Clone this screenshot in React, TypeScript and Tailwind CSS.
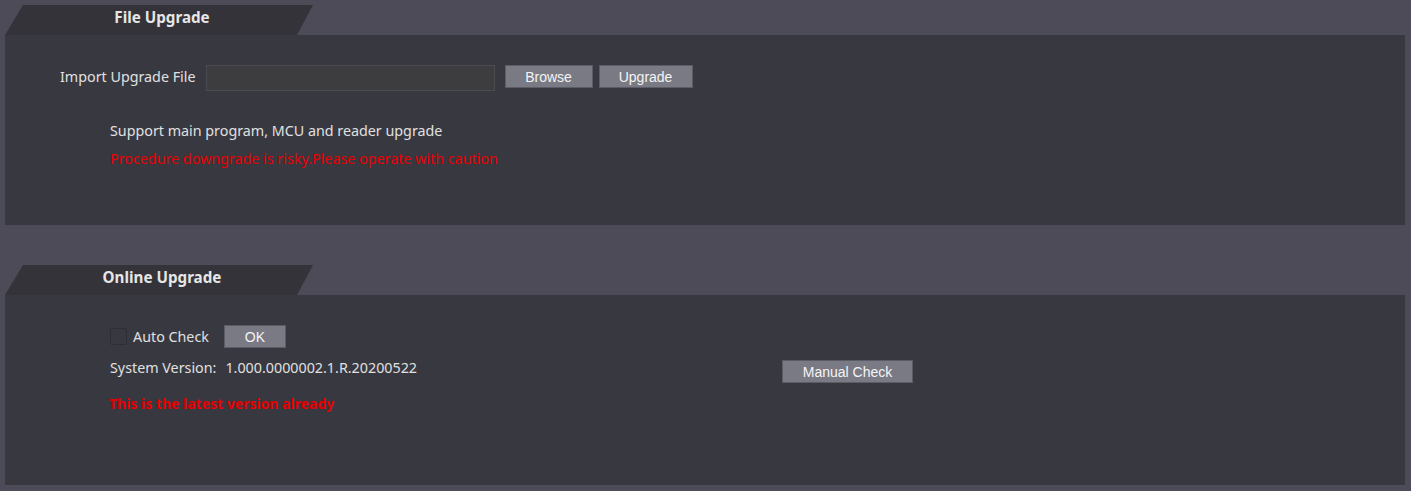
import React from "react";

const font = { fontFamily: '"Noto Sans", "Open Sans", sans-serif' };

function Tab({ title }: { title: string }) {
  return (
    <div className="flex h-[30px] w-[308px] items-start justify-center bg-[#333339] pl-[6px] pt-[2px] [clip-path:polygon(18px_0,308px_0,292px_100%,0_100%)]">
      <span className="text-[15.2px] font-bold leading-[20px] text-[#e6e6e6]">{title}</span>
    </div>
  );
}

function Btn({ label, w }: { label: string; w: string }) {
  return (
    <button
      className={`flex h-[23px] items-center justify-center border border-[#5c5c66] bg-[#7a7a84] pt-[1px] text-[14px] leading-[16px] text-[#f4f4f4] ${w}`}
      style={{ fontFamily: '"Liberation Sans", Arial, sans-serif' }}
    >
      {label}
    </button>
  );
}

export default function App() {
  return (
    <div className="h-[491px] w-[1411px] overflow-hidden bg-[#4d4b58] pl-[5px] pr-[6px] pt-[5px]" style={font}>
      <Tab title="File Upgrade" />
      <div className="h-[190px] bg-[#383841] pl-[55px] pt-[30px]">
        <div className="flex items-start">
          <span className="mt-[2px] text-[14.3px] leading-[20px] text-[#e0e0e0]">Import Upgrade File</span>
          <div className="ml-[10px] h-[26px] w-[289px] border border-[#4b4b52] bg-[#3d3d3f]" />
          <div className="ml-[10px]">
            <Btn label="Browse" w="w-[88px]" />
          </div>
          <div className="ml-[6px]">
            <Btn label="Upgrade" w="w-[94px]" />
          </div>
        </div>
        <div className="ml-[50px] mt-[30px] text-[14.3px] leading-[20px] text-[#e0e0e0]">
          Support main program, MCU and reader upgrade
        </div>
        <div className="ml-[50px] mt-[8px] text-[14.3px] leading-[20px] text-[#e60000]">
          Procedure downgrade is risky.Please operate with caution
        </div>
      </div>

      <div className="mt-[40px]">
        <Tab title="Online Upgrade" />
      </div>
      <div className="h-[190px] bg-[#383841] pl-[105px] pt-[30px]">
        <div className="flex items-center">
          <div className="h-[17px] w-[17px] rounded-[2px] border border-[#2e2e34] bg-[#383841]" />
          <span className="ml-[6px] text-[14.3px] leading-[20px] text-[#e0e0e0]">Auto Check</span>
          <div className="ml-[15px]">
            <Btn label="OK" w="w-[62px]" />
          </div>
        </div>
        <div className="flex items-start">
          <div className="mt-[10px] flex text-[14.3px] leading-[20px] text-[#e0e0e0]">
            <span>System Version:</span>
            <span className="ml-[9px]">1.000.0000002.1.R.20200522</span>
          </div>
          <div className="ml-[365px] mt-[12px]">
            <Btn label="Manual Check" w="w-[131px]" />
          </div>
        </div>
        <div className="-ml-[1px] mt-[11px] text-[14px] font-bold leading-[20px] text-[#e60000]">
          This is the latest version already
        </div>
      </div>
    </div>
  );
}
